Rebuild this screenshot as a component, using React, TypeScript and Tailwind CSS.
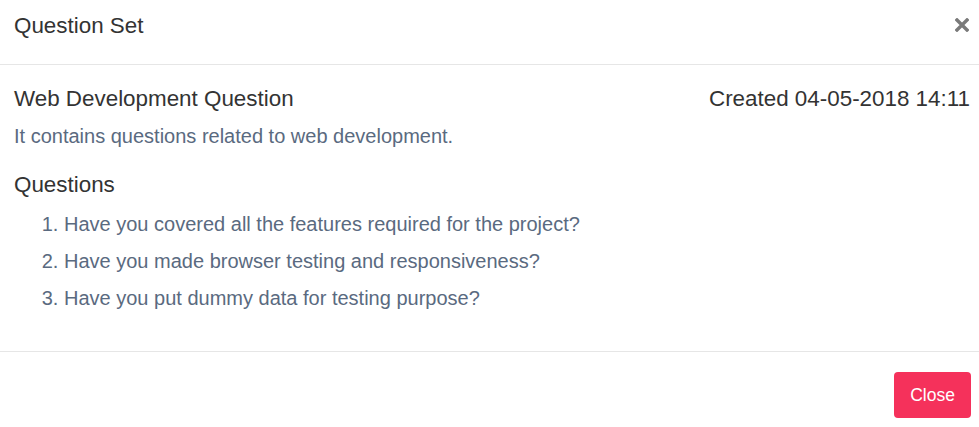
export default function App() {
  const questions = [
    'Have you covered all the features required for the project?',
    'Have you made browser testing and responsiveness?',
    'Have you put dummy data for testing purpose?',
  ];

  return (
    <div className="w-[979px] h-[427px] bg-white text-[#333] font-['Liberation_Sans',Arial,sans-serif] overflow-hidden">
      {/* header */}
      <div className="h-[65px] border-b border-[#e6e6e6] flex items-start justify-between pl-[14px] pr-[9px] pt-[9px]">
        <h2 className="text-[22.4px] leading-[33px]">Question Set</h2>
        <button className="mt-[9px] mr-[1px] text-[#7a7a7a]" aria-label="Close">
          <svg width="14" height="14" viewBox="0 0 14 14">
            <path d="M2 2 L12 12 M12 2 L2 12" stroke="currentColor" strokeWidth="3.4" strokeLinecap="square" />
          </svg>
        </button>
      </div>

      {/* body */}
      <div className="pl-[14px] pr-[9px] pt-[17px] pb-[34px] border-b border-[#e6e6e6]">
        <div className="flex justify-between text-[22.4px] leading-[33px]">
          <span>Web Development Question</span>
          <span>Created 04-05-2018 14:11</span>
        </div>
        <p className="mt-[6px] text-[20px] leading-[30px] text-[#5a6a80]">
          It contains questions related to web development.
        </p>
        <h3 className="mt-[17px] text-[22.4px] leading-[33px]">Questions</h3>
        <ol className="mt-[5px] list-decimal pl-[50px] text-[20px] leading-[37px] text-[#5a6a80]">
          {questions.map((q) => (
            <li key={q}>{q}</li>
          ))}
        </ol>
      </div>

      {/* footer */}
      <div className="flex justify-end pr-[8px] pt-[20px]">
        <button className="h-[46px] w-[77px] rounded-[4px] bg-[#f5315b] text-white text-[17.5px]">
          Close
        </button>
      </div>
    </div>
  );
}
